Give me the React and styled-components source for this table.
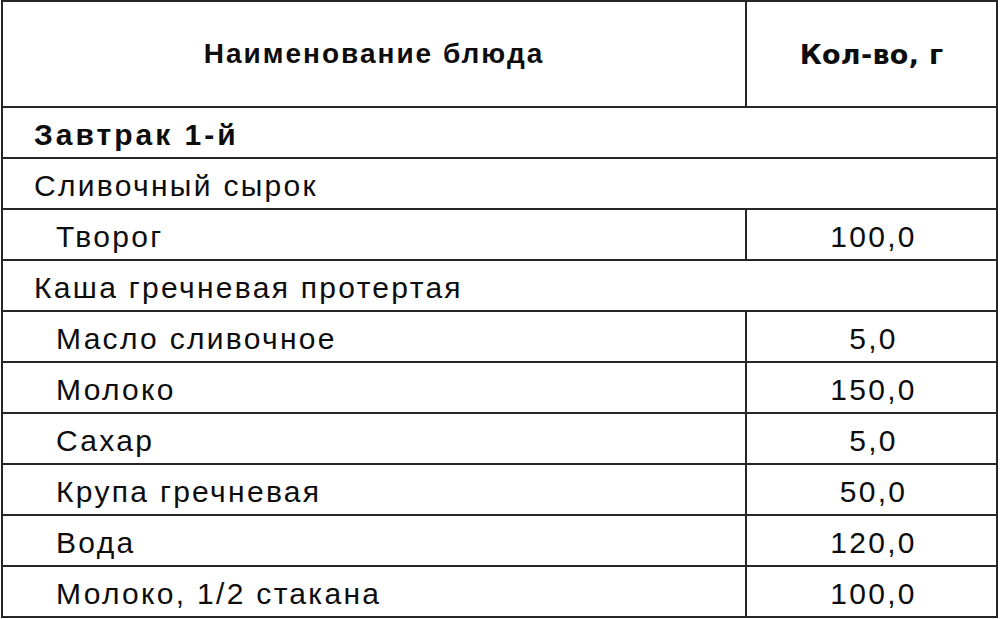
import React from 'react';
import styled, { createGlobalStyle } from 'styled-components';

const GlobalStyle = createGlobalStyle`
  html, body {
    margin: 0;
    padding: 0;
    background: #ffffff;
  }
`;

const Page = styled.div`
  width: 1000px;
  height: 619px;
  padding: 0 2px 0 1px;
  box-sizing: border-box;
  background: #fff;
  overflow: hidden;
`;

const Table = styled.table`
  width: 100%;
  border-collapse: collapse;
  font-family: 'Liberation Sans', Arial, sans-serif;
  color: #0d0d0d;
`;

const HeadCell = styled.th`
  height: 104px;
  padding: 0;
  border: 2px solid #262626;
  font-size: ${(p) => (p.$alt ? '27px' : '28px')};
  letter-spacing: ${(p) => (p.$alt ? '0.3px' : '2px')};
  font-weight: bold;
  text-align: center;
  vertical-align: middle;
  width: ${(p) => p.$width || 'auto'};
  font-family: ${(p) => (p.$alt ? "'DejaVu Sans', Verdana, sans-serif" : 'inherit')};
`;

const Cell = styled.td`
  height: 44px;
  padding: 5px 0 0 ${(p) => (p.$indent ? '53px' : '31px')};
  border: 2px solid #262626;
  font-size: 30px;
  letter-spacing: ${(p) => (p.$bold ? '3px' : '2.3px')};
  font-weight: ${(p) => (p.$bold ? 'bold' : 'normal')};
  text-align: left;
  vertical-align: middle;
  line-height: 1;
  white-space: nowrap;
`;

const Amount = styled.td`
  height: 44px;
  padding: 5px 0 0 4px;
  border: 2px solid #262626;
  font-size: 30px;
  letter-spacing: 2.3px;
  text-align: center;
  vertical-align: middle;
  line-height: 1;
`;

const rows = [
  { name: 'Завтрак 1-й', section: true },
  { name: 'Сливочный сырок', group: true },
  { name: 'Творог', amount: '100,0' },
  { name: 'Каша гречневая протертая', group: true },
  { name: 'Масло сливочное', amount: '5,0' },
  { name: 'Молоко', amount: '150,0' },
  { name: 'Сахар', amount: '5,0' },
  { name: 'Крупа гречневая', amount: '50,0' },
  { name: 'Вода', amount: '120,0' },
  { name: 'Молоко, 1/2 стакана', amount: '100,0' },
];

export default function App() {
  return (
    <>
      <GlobalStyle />
      <Page>
        <Table>
          <thead>
            <tr>
              <HeadCell $width="742px">Наименование блюда</HeadCell>
              <HeadCell $alt>Кол-во, г</HeadCell>
            </tr>
          </thead>
          <tbody>
            {rows.map((row) =>
              row.amount ? (
                <tr key={row.name}>
                  <Cell $indent>{row.name}</Cell>
                  <Amount>{row.amount}</Amount>
                </tr>
              ) : (
                <tr key={row.name}>
                  <Cell colSpan={2} $bold={row.section}>
                    {row.name}
                  </Cell>
                </tr>
              )
            )}
          </tbody>
        </Table>
      </Page>
    </>
  );
}
